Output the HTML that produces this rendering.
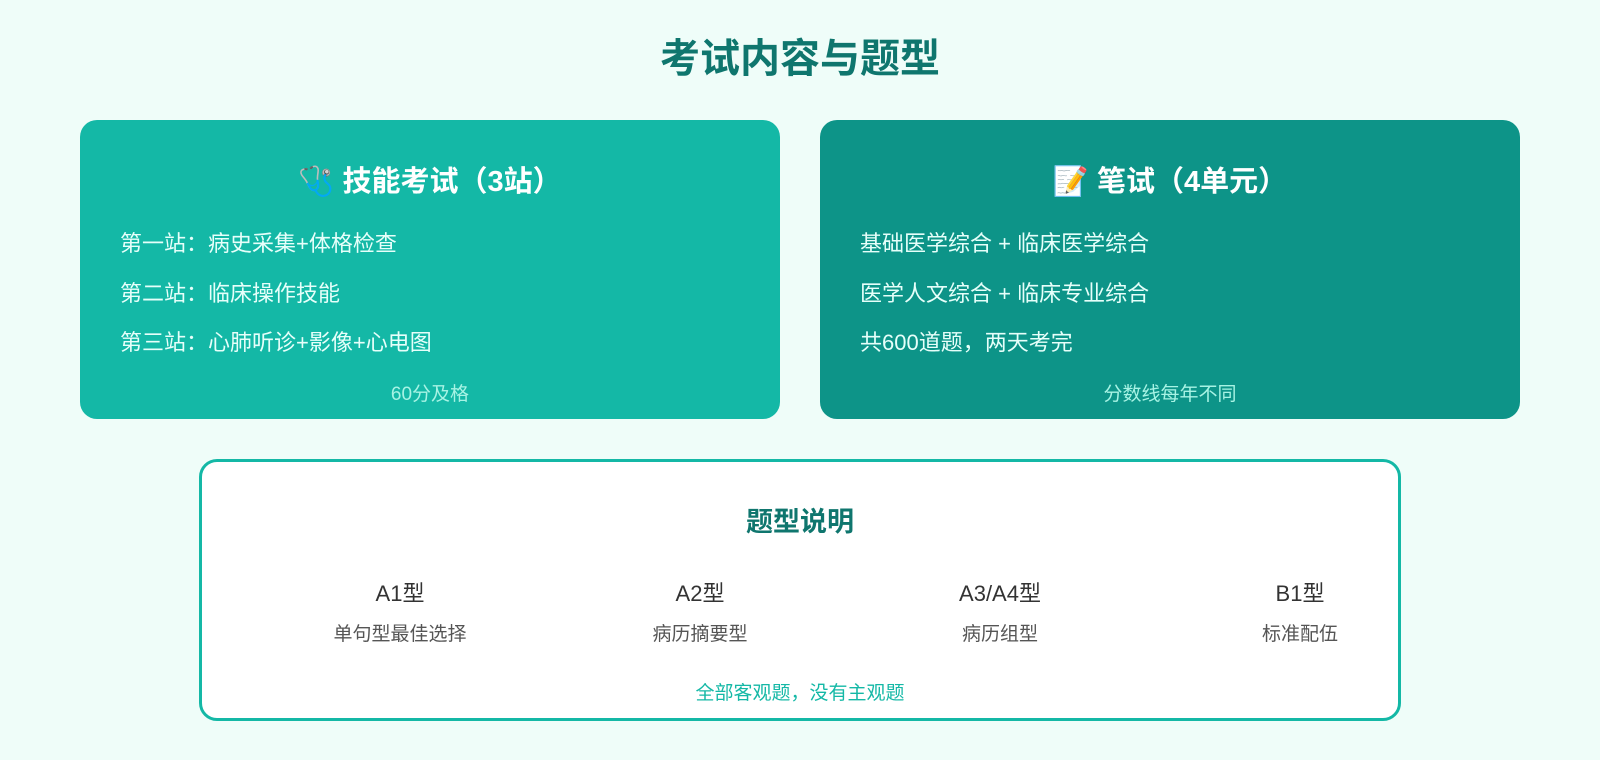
<!DOCTYPE html>
<html><head><meta charset="utf-8"><style>
*{margin:0;padding:0;box-sizing:border-box}
body{width:1600px;height:760px;background:#effdf9;font-family:"Liberation Sans","Noto Sans CJK SC",sans-serif;position:relative;overflow:hidden}
h1{position:absolute;top:35px;left:0;width:1600px;text-align:center;font-size:40px;line-height:48px;color:#0f766e;font-weight:bold}
.card{position:absolute;top:120px;height:299px;width:700px;border-radius:17px;color:#ecfdf8}
.c1{left:80px;background:#14b8a6}.c2{left:820px;background:#0d9488}
.ht{position:absolute;top:43px;left:0;width:100%;text-align:center;font-size:29px;line-height:38px;font-weight:bold;color:#fff}
.ln{position:absolute;left:40px;font-size:22px;line-height:28px;color:#e6fffa}
.ft{position:absolute;left:0;width:100%;text-align:center;font-size:19px;line-height:26px;color:#a7f3e4}
.box{position:absolute;left:199px;top:459px;width:1202px;height:262px;border:3px solid #14b8a6;border-radius:18px;background:#fff}
.bt{position:absolute;top:505px;left:199px;width:1202px;text-align:center;font-size:27px;line-height:34px;font-weight:bold;color:#0f766e}
.col{position:absolute;width:240px;text-align:center}
.col .a{position:absolute;top:580px;width:100%;font-size:22px;line-height:28px;color:#333}
.col .b{position:absolute;top:622px;width:100%;font-size:19px;line-height:26px;color:#555}
.bf{position:absolute;top:681px;left:199px;width:1202px;text-align:center;font-size:19px;line-height:26px;color:#14b8a6}
</style></head><body>
<h1>考试内容与题型</h1>
<div class="card c1">
<div class="ht">🩺 技能考试（3站）</div>
<div class="ln" style="top:110px">第一站：病史采集+体格检查</div>
<div class="ln" style="top:160px">第二站：临床操作技能</div>
<div class="ln" style="top:209px">第三站：心肺听诊+影像+心电图</div>
<div class="ft" style="top:262px">60分及格</div>
</div>
<div class="card c2">
<div class="ht">📝 笔试（4单元）</div>
<div class="ln" style="top:110px">基础医学综合 + 临床医学综合</div>
<div class="ln" style="top:160px">医学人文综合 + 临床专业综合</div>
<div class="ln" style="top:209px">共600道题，两天考完</div>
<div class="ft" style="top:262px">分数线每年不同</div>
</div>
<div class="box"></div>
<div class="bt">题型说明</div>
<div class="col" style="left:280px"><div class="a">A1型</div><div class="b">单句型最佳选择</div></div>
<div class="col" style="left:580px"><div class="a">A2型</div><div class="b">病历摘要型</div></div>
<div class="col" style="left:880px"><div class="a">A3/A4型</div><div class="b">病历组型</div></div>
<div class="col" style="left:1180px"><div class="a">B1型</div><div class="b">标准配伍</div></div>
<div class="bf">全部客观题，没有主观题</div>
</body></html>
